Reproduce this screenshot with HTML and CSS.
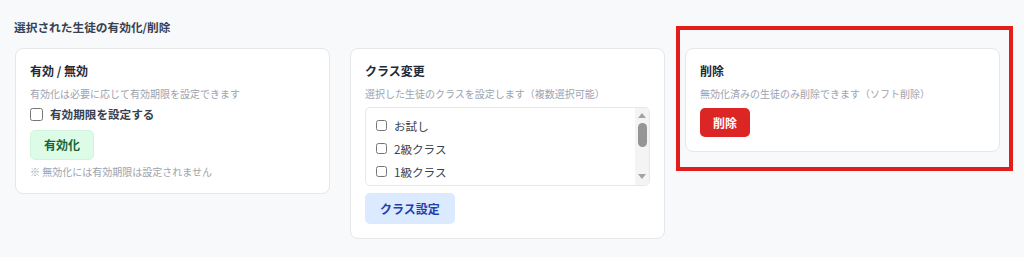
FILE: index.html
```html
<!DOCTYPE html>
<html lang="ja">
<head>
	<meta charset="UTF-8">
	<title>生徒の有効化/削除</title>
	<link rel="stylesheet" href="styles.css">
</head>
<body>
	<main class="page">
		<h2 class="heading">選択された生徒の有効化/削除</h2>
		<div class="cards">
			<!-- 有効 / 無効 -->
			<section class="card">
				<h3 class="title">有効 / 無効</h3>
				<p class="desc">有効化は必要に応じて有効期限を設定できます</p>
				<label class="check">
					<input type="checkbox">
					<span>有効期限を設定する</span>
				</label>
				<button class="btn btn-green">有効化</button>
				<p class="note">※ 無効化には有効期限は設定されません</p>
			</section>

			<!-- クラス変更 -->
			<section class="card">
				<h3 class="title">クラス変更</h3>
				<p class="desc">選択した生徒のクラスを設定します（複数選択可能）</p>
				<div class="classbox">
					<ul class="classlist">
						<li><label><input type="checkbox"><span>お試し</span></label></li>
						<li><label><input type="checkbox"><span>2級クラス</span></label></li>
						<li><label><input type="checkbox"><span>1級クラス</span></label></li>
					</ul>
					<div class="scrollbar">
						<b class="arrow-up"></b>
						<b class="thumb"></b>
						<b class="arrow-down"></b>
					</div>
				</div>
				<button class="btn btn-blue">クラス設定</button>
			</section>

			<!-- 削除 -->
			<section class="card card-marked">
				<h3 class="title">削除</h3>
				<p class="desc">無効化済みの生徒のみ削除できます（ソフト削除）</p>
				<button class="btn btn-red">削除</button>
				<i class="mark"></i>
			</section>
		</div>
	</main>
</body>
</html>
```

FILE: styles.css
```css
html,body{
	margin: 0;
	padding: 0;
	height: 100%;
	background-color: #f8f9fb;
}
body{
	font-family: "Noto Sans CJK JP", "Noto Sans", sans-serif;
	color: #1f2937;
	overflow: hidden;
}
.page{
	padding: 15px 24px 0 15px;
}
.heading{
	margin: 0 0 9px -1px;
	font-size: 11.7px;
	line-height: 24px;
	font-weight: 700;
	color: #374151;
}
.cards{
	display: grid;
	grid-template-columns: repeat(3, 1fr);
	gap: 20px;
	align-items: start;
}
.card{
	display: flex;
	flex-direction: column;
	align-items: flex-start;
	padding: 13px 14px 14px 14px;
	background-color: #fff;
	border: 1px solid #e5e7eb;
	border-radius: 8px;
}
.title{
	margin: 0;
	font-size: 12px;
	line-height: 18px;
	font-weight: 700;
	color: #1f2937;
}
.desc{
	margin: 7px 0 0;
	font-size: 10px;
	line-height: 14px;
	color: #9ca3af;
}
.check{
	display: flex;
	align-items: center;
	gap: 7px;
	margin-top: 4px;
	font-size: 11.6px;
	line-height: 18px;
	font-weight: 600;
	color: #374151;
}
.check input{
	margin: 0;
	width: 13px;
	height: 13px;
}
.btn{
	margin-top: 7px;
	padding: 7px 14px;
	font-family: inherit;
	font-size: 12px;
	line-height: 16px;
	font-weight: 700;
	border: none;
	border-radius: 5px;
}
.btn-green{
	color: #166534;
	background-color: #dcfce7;
	border: 1px solid #d1f5dc;
	padding: 6px 13px;
}
.btn-blue{
	padding: 8px 15px 7px;
	color: #1e40af;
	background-color: #dbeafe;
}
.btn-red{
	padding: 7px 13px 6px;
	color: #fff;
	background-color: #dc2626;
}
.note{
	margin: 5px 0 0;
	font-size: 10px;
	line-height: 14px;
	color: #9ca3af;
}
/* クラス選択ボックス */
.classbox{
	align-self: stretch;
	display: flex;
	margin-top: 6px;
	height: 77px;
	overflow: hidden;
	border: 1px solid #e5e7eb;
	border-radius: 5px;
}
.classlist{
	flex: 1;
	margin: 0;
	padding: 6px 0 0 10px;
	list-style: none;
}
.classlist label{
	display: flex;
	align-items: center;
	gap: 7px;
	height: 23px;
	font-size: 11.6px;
	color: #374151;
}
.classlist input{
	margin: 0;
	width: 11px;
	height: 11px;
}
.scrollbar{
	display: flex;
	flex-direction: column;
	align-items: center;
	width: 14px;
	background-color: #f4f4f4;
}
.scrollbar b{
	display: block;
}
.arrow-up,.arrow-down{
	width: 0;
	height: 0;
	border-left: 4px solid transparent;
	border-right: 4px solid transparent;
}
.arrow-up{
	margin-top: 5px;
	border-bottom: 5px solid #a3a3a3;
}
.arrow-down{
	margin-bottom: 6px;
	border-top: 5px solid #a3a3a3;
}
.thumb{
	margin-top: 5px;
	margin-bottom: auto;
	width: 9px;
	height: 24px;
	border-radius: 5px;
	background-color: #959595;
}
/* 注釈の赤枠 */
.card-marked{
	position: relative;
}
.mark{
	position: absolute;
	top: -23px;
	left: -10px;
	right: -14px;
	bottom: -20px;
	border: 4px solid #e31c1c;
	pointer-events: none;
}
```
